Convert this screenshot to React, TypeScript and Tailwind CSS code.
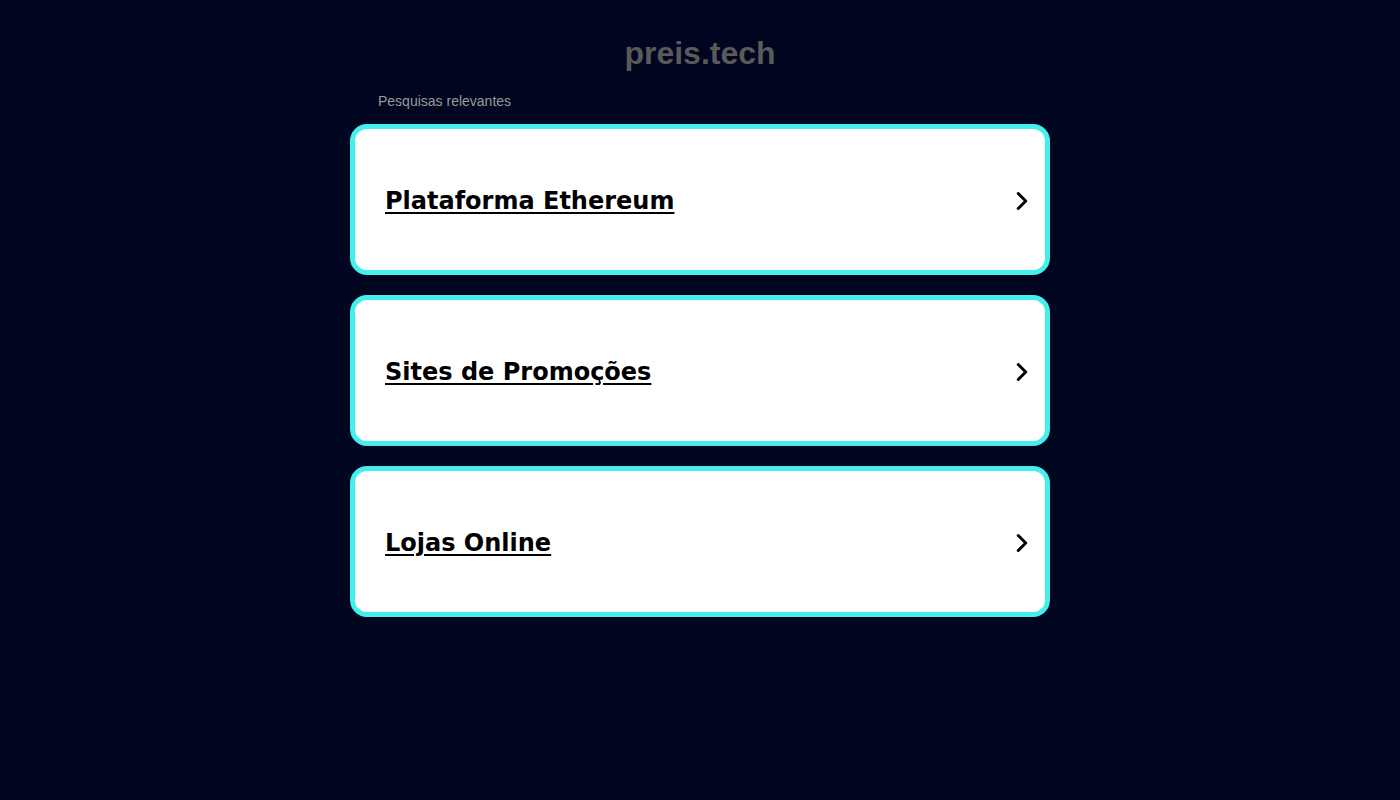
import { ChevronRight } from "lucide-react"

const links = ["Plataforma Ethereum", "Sites de Promoções", "Lojas Online"]

export default function App() {
  return (
    <div className="min-h-[800px] bg-[#000620] font-['Liberation_Sans',Arial,sans-serif]">
      <div className="mx-auto w-[700px] pt-[33px]">
        <h1 className="text-center text-[32px] font-bold leading-[40px] text-[#5a5a5a]">preis.tech</h1>
        <div className="mt-[18px] pl-[28px] text-[14px] leading-[20px] text-[#9a9a9a]">Pesquisas relevantes</div>
        <div className="mt-[13px] flex flex-col gap-[20px]">
          {links.map((l) => (
            <a
              key={l}
              href="#"
              className="flex h-[151px] items-center justify-between rounded-[17px] border-[5px] border-[#44f0ee] bg-white pl-[30px] pr-[8px]"
            >
              <span className="mt-[3px] font-['DejaVu_Sans',sans-serif] text-[24px] font-bold text-black underline underline-offset-[3px]">
                {l}
              </span>
              <ChevronRight className="mt-[2px] h-[30px] w-[30px] text-black" strokeWidth={2.4} />
            </a>
          ))}
        </div>
      </div>
    </div>
  )
}
